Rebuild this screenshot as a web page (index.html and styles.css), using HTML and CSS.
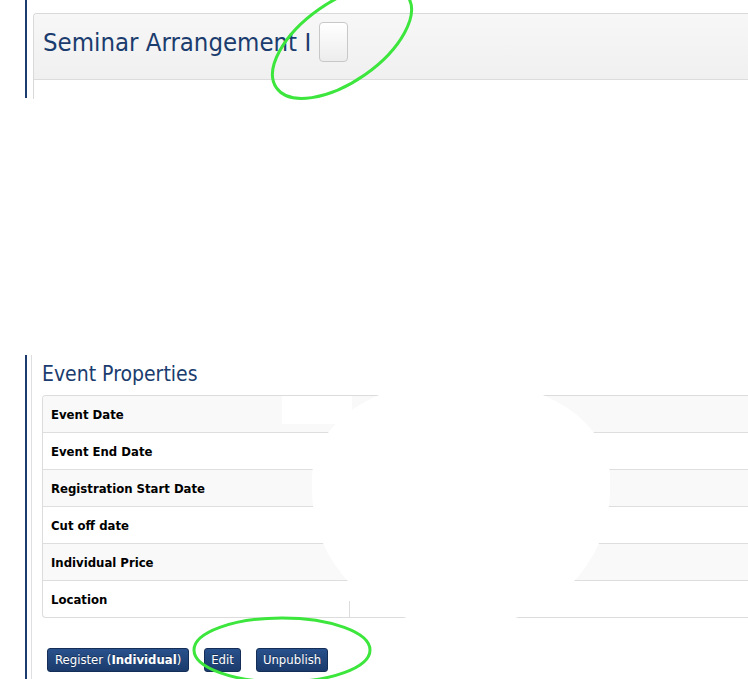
FILE: index.html
```html
<!DOCTYPE html>
<html>
<head>
<meta charset="utf-8">
<link rel="stylesheet" href="styles.css">
</head>
<body>
<div class="page">
  <section class="top">
    <div class="panel">
      <div class="panel-head">
        <h1 class="title">Seminar Arrangement I</h1>
        <span class="toggle"></span>
      </div>
      <div class="panel-body"></div>
    </div>
  </section>

  <section class="bottom">
    <div class="inner">
      <h2 class="subtitle">Event Properties</h2>
      <div class="props">
        <div class="row odd"><span class="label">Event Date</span><span class="value"><span class="erase"></span></span></div>
        <div class="row"><span class="label">Event End Date</span><span class="value"></span></div>
        <div class="row odd"><span class="label">Registration Start Date</span><span class="value"></span></div>
        <div class="row"><span class="label">Cut off date</span><span class="value"></span></div>
        <div class="row odd"><span class="label">Individual Price</span><span class="value"></span></div>
        <div class="row last"><span class="label">Location</span><span class="value sep"></span></div>
      </div>
      <div class="actions">
        <button class="btn btn-wide">Register (<b>Individual</b>)</button>
        <button class="btn">Edit</button>
        <button class="btn">Unpublish</button>
      </div>
    </div>
  </section>

  <div class="blob"></div>
  <svg class="mark mark-top" width="160" height="120" viewBox="0 0 160 120">
    <ellipse cx="80" cy="50" rx="80" ry="40" transform="rotate(-35 80 50)" fill="none" stroke="#3ce63c" stroke-width="3"/>
  </svg>
  <svg class="mark mark-bottom" width="190" height="70" viewBox="0 0 190 70">
    <ellipse cx="95" cy="34" rx="88" ry="32" fill="none" stroke="#3ce63c" stroke-width="3"/>
  </svg>
</div>
</body>
</html>
```

FILE: styles.css
```css
html, body {
  margin: 0;
  padding: 0;
  background: #fff;
}
body {
  font-family: "DejaVu Sans Condensed", "DejaVu Sans", Verdana, sans-serif;
  width: 748px;
  height: 679px;
  overflow: hidden;
}
.page {
  position: relative;
  width: 748px;
  height: 679px;
}
.top {
  margin-left: 25px;
  height: 98px;
  border-left: 2px solid #1c3c70;
  padding: 13px 0 0 6px;
  box-sizing: border-box;
}
.panel {
  border: 1px solid #d9d9d9;
  border-right: none;
  border-bottom: none;
  border-radius: 4px 0 0 0;
  height: 85px;
}
.panel-head {
  height: 66px;
  background: linear-gradient(#f7f7f7, #f0f0f0);
  border-bottom: 1px solid #dcdcdc;
  display: flex;
  align-items: center;
  padding-left: 9px;
  padding-bottom: 10px;
  box-sizing: border-box;
  border-radius: 4px 0 0 0;
}
.title {
  margin: 0;
  font-weight: normal;
  font-size: 25.5px;
  color: #1b3c6e;
  letter-spacing: 0;
}
.toggle {
  display: inline-block;
  width: 29px;
  height: 40px;
  margin-left: 8px;
  border: 1px solid #c8c8c8;
  border-radius: 4px;
  background: linear-gradient(#ffffff, #ececec);
  box-sizing: border-box;
}
.bottom {
  margin-top: 257px;
  margin-left: 25px;
  height: 324px;
  border-left: 2px solid #1c3c70;
  padding-left: 4px;
  box-sizing: border-box;
}
.inner {
  border-left: 1px solid #dedede;
  height: 100%;
  padding-left: 10px;
}
.subtitle {
  margin: 0;
  padding-top: 7px;
  height: 40px;
  box-sizing: border-box;
  font-weight: normal;
  font-size: 21px;
  color: #1b3c6e;
}
.props {
  border: 1px solid #dcdcdc;
  border-right: none;
  border-radius: 4px 0 0 4px;
  overflow: hidden;
}
.row {
  display: flex;
  height: 37px;
  border-bottom: 1px solid #dedede;
  box-sizing: border-box;
  align-items: center;
}
.row.last {
  border-bottom: none;
  height: 36px;
}
.row.odd {
  background: #f9f9f9;
}
.label {
  width: 230px;
  padding-left: 8px;
  font-weight: bold;
  font-size: 13px;
  color: #000;
}
.value {
  flex: 1;
  align-self: stretch;
  position: relative;
}
.value.sep {
  border-left: 1px solid #dcdcdc;
  margin-left: 68px;
  margin-top: 20px;
}
.erase {
  position: absolute;
  left: 1px;
  top: 0;
  width: 70px;
  height: 28px;
  background: #fff;
}
.actions {
  display: flex;
  gap: 15px;
  padding-top: 30px;
  padding-left: 5px;
}
.btn {
  font-family: "DejaVu Sans Condensed", "DejaVu Sans", Verdana, sans-serif;
  font-size: 13px;
  color: #fff;
  height: 24px;
  padding: 0 6px;
  border: 1px solid #142e57;
  border-radius: 3px;
  background: linear-gradient(#29518c, #1b3b6c);
  text-shadow: 0 -1px 0 rgba(0,0,0,0.35);
  line-height: 22px;
}
.btn-wide {
  padding: 0 7px;
}
.btn b {
  font-weight: bold;
}
.blob {
  position: absolute;
  left: 312px;
  top: 380px;
  width: 298px;
  height: 244px;
  background: #fff;
  border-radius: 48% 48% 45% 45% / 40% 40% 55% 55%;
}
.mark {
  position: absolute;
  overflow: visible;
}
.mark-top {
  left: 262px;
  top: -8px;
}
.mark-bottom {
  left: 187px;
  top: 616px;
}
```
